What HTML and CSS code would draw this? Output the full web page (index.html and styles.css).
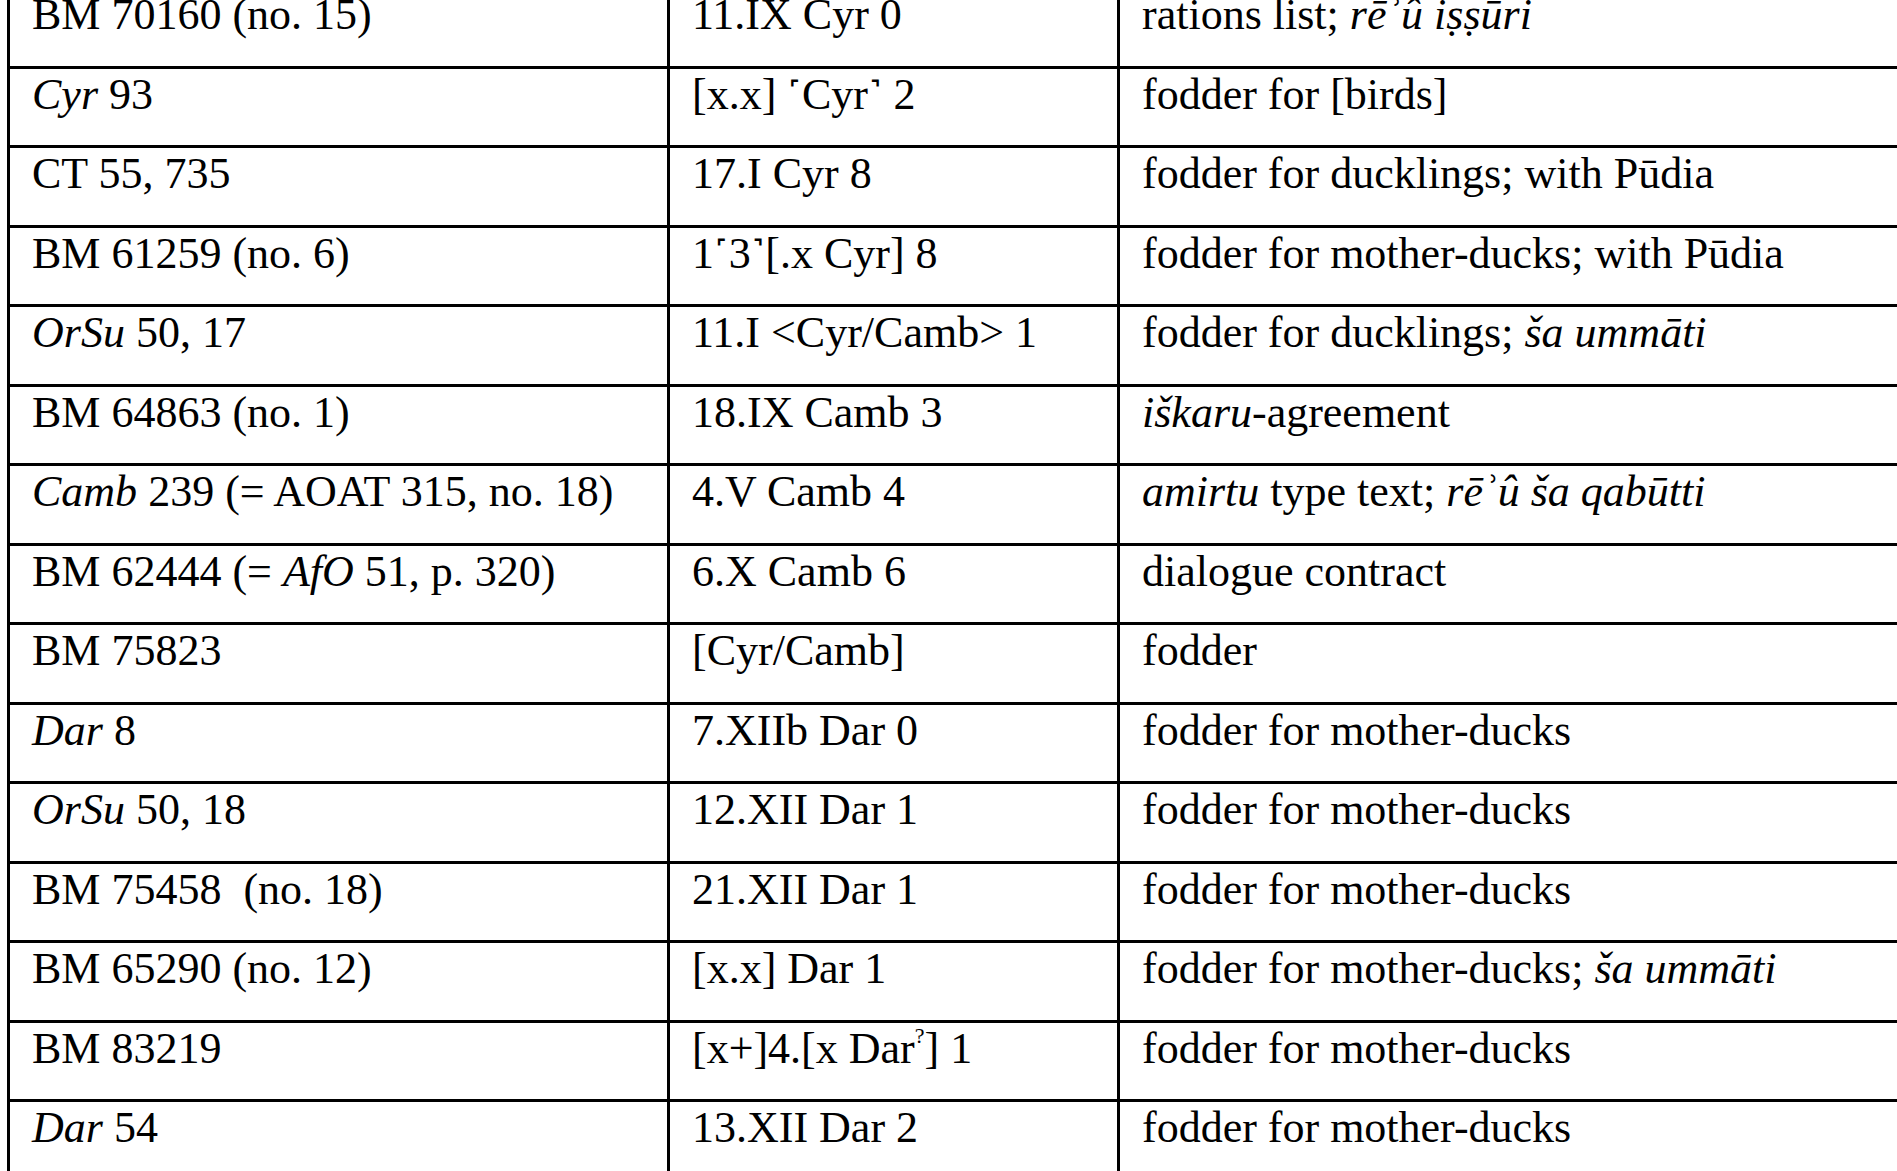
FILE: index.html
```html
<!DOCTYPE html>
<html lang="en">
<head>
<meta charset="utf-8">
<title>Texts</title>
<link rel="stylesheet" href="styles.css">
</head>
<body>
<table class="texts">
  <colgroup>
    <col class="c1"><col class="c2"><col class="c3">
  </colgroup>
  <tbody>
    <tr><td>BM 70160 (no. 15)</td><td>11.IX Cyr 0</td><td>rations list; <i>rēʾû iṣṣūri</i></td></tr>
    <tr><td><i>Cyr</i> 93</td><td>[x.x] ˹Cyr˺ 2</td><td>fodder for [birds]</td></tr>
    <tr><td>CT 55, 735</td><td>17.I Cyr 8</td><td>fodder for ducklings; with Pūdia</td></tr>
    <tr><td>BM 61259 (no. 6)</td><td>1˹3˺[.x Cyr] 8</td><td>fodder for mother-ducks; with Pūdia</td></tr>
    <tr><td><i>OrSu</i> 50, 17</td><td>11.I &lt;Cyr/Camb&gt; 1</td><td>fodder for ducklings; <i>ša ummāti</i></td></tr>
    <tr><td>BM 64863 (no. 1)</td><td>18.IX Camb 3</td><td><i>iškaru</i>-agreement</td></tr>
    <tr><td><i>Camb</i> 239 (= AOAT 315, no. 18)</td><td>4.V Camb 4</td><td><i>amirtu</i> type text; <i>rēʾû ša qabūtti</i></td></tr>
    <tr><td>BM 62444 (= <i>AfO</i> 51, p. 320)</td><td>6.X Camb 6</td><td>dialogue contract</td></tr>
    <tr><td>BM 75823</td><td>[Cyr/Camb]</td><td>fodder</td></tr>
    <tr><td><i>Dar</i> 8</td><td>7.XIIb Dar 0</td><td>fodder for mother-ducks</td></tr>
    <tr><td><i>OrSu</i> 50, 18</td><td>12.XII Dar 1</td><td>fodder for mother-ducks</td></tr>
    <tr><td>BM 75458&nbsp; (no. 18)</td><td>21.XII Dar 1</td><td>fodder for mother-ducks</td></tr>
    <tr><td>BM 65290 (no. 12)</td><td>[x.x] Dar 1</td><td>fodder for mother-ducks; <i>ša ummāti</i></td></tr>
    <tr><td>BM 83219</td><td>[x+]4.[x Dar<sup>?</sup>] 1</td><td>fodder for mother-ducks</td></tr>
    <tr><td><i>Dar</i> 54</td><td>13.XII Dar 2</td><td>fodder for mother-ducks</td></tr>
  </tbody>
</table>
</body>
</html>
```
FILE: styles.css
```css
html, body {
  margin: 0;
  padding: 0;
  background: #fff;
  overflow: hidden;
}
body {
  padding-left: 7px;
  font-family: "Liberation Serif", "DejaVu Serif", serif;
  color: #000;
}
.texts {
  border-collapse: collapse;
  table-layout: fixed;
  width: 2000px;
  margin-top: -14px;
  font-size: 44px;
}
.c1 { width: 660px; }
.c2 { width: 450px; }
.c3 { width: 890px; }
.texts td {
  border: 3px solid #000;
  height: 79.5px;
  box-sizing: border-box;
  padding: 2px 22px 0 22px;
  vertical-align: top;
  line-height: 48px;
  white-space: nowrap;
}
.texts sup {
  font-size: 0.5em;
  line-height: 0;
  vertical-align: 0.9em;
}
```
